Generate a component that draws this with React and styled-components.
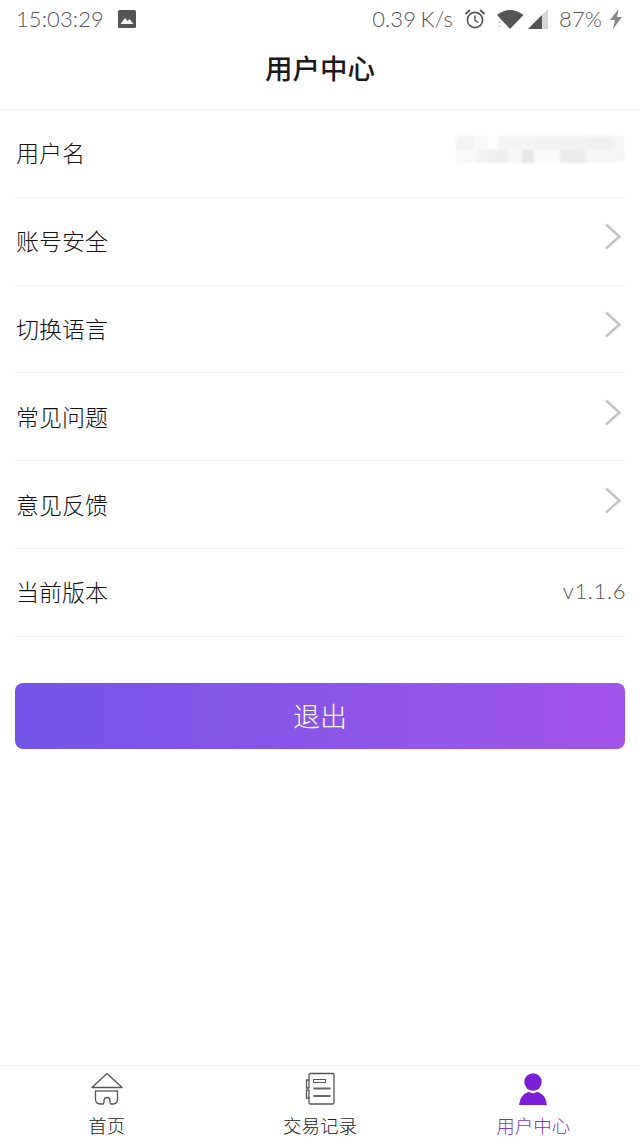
import React from "react";
import styled, { createGlobalStyle } from "styled-components";

const Global = createGlobalStyle`
  html, body { margin: 0; padding: 0; background: #fff; }
  * { box-sizing: border-box; }
  body { font-family: "Noto Sans CJK SC", "Noto Sans", sans-serif; }
`;

const Page = styled.div`
  width: 640px;
  height: 1138px;
  display: flex;
  flex-direction: column;
  background: #fff;
  overflow: hidden;
`;

const StatusBar = styled.div`
  height: 38px;
  padding: 0 17px 0 16px;
  display: flex;
  align-items: center;
  justify-content: space-between;
  font-family: "Lato", "Noto Sans", sans-serif;
  font-weight: 300;
  font-size: 22px;
  color: #555;
`;

const StatusGroup = styled.div`
  display: flex;
  align-items: center;
`;

const StatusText = styled.span`
  line-height: 38px;
  margin-left: ${(p) => p.$ml || 0}px;
  letter-spacing: 0.1px;
  word-spacing: -1.5px;
`;

const StatusIcon = styled.svg`
  display: block;
  flex: none;
  margin-left: ${(p) => p.$ml || 0}px;
`;

const Header = styled.header`
  height: 72px;
  display: flex;
  align-items: center;
  justify-content: center;
  padding-bottom: 13px;
  border-bottom: 1px solid #f0f0f0;
  font-size: 27.5px;
  font-weight: 500;
  color: #1a1a1a;
`;

const List = styled.div`
  padding: 0 15px;
  display: flex;
  flex-direction: column;
`;

const Row = styled.div`
  height: 87.8px;
  display: flex;
  align-items: center;
  justify-content: space-between;
  border-bottom: 1px solid #f4f4f4;
  font-size: 23px;
  font-weight: 300;
  color: #111;
`;

const RowLabel = styled.span`
  margin: -2px 0 0 1px;
`;

const Version = styled.span`
  font-family: "Lato", "Noto Sans", sans-serif;
  font-size: 22px;
  font-weight: 300;
  letter-spacing: 0.6px;
  color: #555;
  margin-right: -1px;
  margin-top: -3px;
`;

const Logout = styled.button`
  display: flex;
  align-items: center;
  justify-content: center;
  height: 66px;
  margin: 46px 15px 0;
  width: 610px;
  border: 0;
  padding: 0;
  border-radius: 8px;
  background: linear-gradient(90deg, #7454e8, #a254ea);
  color: #fff;
  font-family: inherit;
  font-size: 27px;
  font-weight: 300;
`;

const Spacer = styled.div`
  flex: 1;
`;

const TabBar = styled.nav`
  height: 73px;
  border-top: 1px solid #eee;
  display: grid;
  grid-template-columns: repeat(3, 1fr);
`;

const Tab = styled.div`
  display: flex;
  flex-direction: column;
  align-items: center;
  padding-top: 6px;
  color: ${(p) => (p.$active ? "#7a35bd" : "#222")};
  font-size: 18.5px;
  font-weight: 300;
  line-height: 27px;
`;

const TabIcon = styled.svg`
  display: block;
  margin-bottom: 6px;
`;

const ChevronIcon = styled.svg`
  display: block;
  margin: -8px 3px 0 0;
`;

const MosaicIcon = styled.svg`
  display: block;
  margin: -6px -1px 0 0;
  filter: blur(1px);
`;

const Chevron = () => (
  <ChevronIcon width="18" height="28" viewBox="0 0 18 28">
    <path d="M2 1.5 L15.5 13.5 L2 25.5" fill="none" stroke="#c4c4c4" strokeWidth="2.4" />
  </ChevronIcon>
);

const mosaic = [
  [0, 0, 18, 14, "#f3f3f3"], [18, 0, 14, 14, "#f8f8f8"], [32, 0, 10, 14, "#fdfdfd"], [42, 0, 38, 14, "#f4f4f4"],
  [80, 0, 48, 14, "#f2f2f2"], [128, 0, 28, 14, "#f0f0f0"], [156, 0, 12, 14, "#f5f5f5"],
  [0, 14, 20, 13, "#f8f8f8"], [20, 14, 12, 13, "#f3f3f3"], [32, 14, 20, 13, "#eeeeee"], [52, 14, 14, 13, "#f7f7f7"],
  [66, 14, 12, 13, "#e6e6e6"], [78, 14, 26, 13, "#fafafa"], [104, 14, 26, 13, "#ebebeb"], [130, 14, 30, 13, "#f6f6f6"], [160, 14, 8, 11, "#f4f4f4"],
];

const Mosaic = () => (
  <MosaicIcon width="170" height="28" viewBox="0 0 170 28">
    {mosaic.map(([x, y, w, h, c], i) => (
      <rect key={i} x={x} y={y} width={w} height={h} fill={c} />
    ))}
  </MosaicIcon>
);

const rows = ["账号安全", "切换语言", "常见问题", "意见反馈"];

export default function App() {
  return (
    <Page>
      <Global />
      <StatusBar>
        <StatusGroup>
          <StatusText>15:03:29</StatusText>
          <StatusIcon $ml={14} width="18" height="18" viewBox="0 0 18 18">
            <rect width="18" height="18" rx="1.5" fill="#555" />
            <path d="M2.5 14 L7 8 L9.5 11 L11.5 9 L15.5 14 Z" fill="#fff" />
          </StatusIcon>
        </StatusGroup>
        <StatusGroup>
          <StatusText>0.39 K/s</StatusText>
          <StatusIcon $ml={11} width="22" height="22" viewBox="0 0 22 22">
            <circle cx="11" cy="12" r="7.6" fill="none" stroke="#555" strokeWidth="1.6" />
            <path d="M11 7.5 V12.5 L14.5 14.5" fill="none" stroke="#555" strokeWidth="1.4" />
            <path d="M1.5 6 L6 2 M20.5 6 L16 2" stroke="#555" strokeWidth="1.8" />
          </StatusIcon>
          <StatusIcon $ml={10} width="28" height="22" viewBox="0 0 28 22">
            <path d="M1 7 Q14 -3 27.5 7 L14 21 Z" fill="#555" />
            <path d="M2 15 L3.5 13 L5 15 Z M2 17.5 L3.5 19.5 L5 17.5 Z" fill="#ccc" />
          </StatusIcon>
          <StatusIcon $ml={4} width="20" height="22" viewBox="0 0 20 22">
            <path d="M0 21 L20 1 V21 Z" fill="#d6d6d6" />
            <path d="M0 21 L14 7 V21 Z" fill="#555" />
          </StatusIcon>
          <StatusText $ml={11}>87%</StatusText>
          <StatusIcon $ml={7} width="14" height="20" viewBox="0 0 14 20">
            <path d="M9.5 0 L1 11 H6 L4 20 L13 8 H8 Z" fill="#888" />
          </StatusIcon>
        </StatusGroup>
      </StatusBar>
      <Header>用户中心</Header>
      <List>
        <Row>
          <RowLabel>用户名</RowLabel>
          <Mosaic />
        </Row>
        {rows.map((r) => (
          <Row key={r}>
            <RowLabel>{r}</RowLabel>
            <Chevron />
          </Row>
        ))}
        <Row>
          <RowLabel>当前版本</RowLabel>
          <Version>v1.1.6</Version>
        </Row>
      </List>
      <Logout>退出</Logout>
      <Spacer />
      <TabBar>
        <Tab>
          <TabIcon width="34" height="34" viewBox="0 0 34 34" fill="none" stroke="#555" strokeWidth="1.3">
            <path d="M17 1.5 L32 15.5 H2 Z" strokeLinejoin="round" />
            <path d="M5 19 H28" />
            <path d="M5.5 19 V27 Q5.5 32 10.5 32 H13 Q14 32 14 29 Q14 25.5 17 25.5 Q20 25.5 20 29 Q20 32 21 32 H23 Q27.5 32 27.5 27 V19" />
          </TabIcon>
          首页
        </Tab>
        <Tab>
          <TabIcon width="34" height="34" viewBox="0 0 34 34" fill="none" stroke="#555" strokeWidth="1.3">
            <path d="M6 8 V3 Q6 1.5 7.5 1.5 H29.5 Q31 1.5 31 3 V30.5 Q31 32 29.5 32 H7.5 Q6 32 6 30.5 V26" />
            <path d="M6 8 H3.5 V16 H6 V8 M6 18 H3.5 V26 H6 V18" />
            <rect x="10.5" y="7.5" width="12" height="3" strokeWidth="1" />
            <path d="M10.5 16.5 H27.5 M10.5 24 H27.5" strokeWidth="2" stroke="#666" />
          </TabIcon>
          交易记录
        </Tab>
        <Tab $active>
          <TabIcon width="34" height="34" viewBox="0 0 34 34" fill="#7a1fd6">
            <circle cx="17" cy="10" r="8.7" />
            <path d="M3 33 Q4 23 12.5 19.8 Q17 22.5 21.5 19.8 Q30 23 31 33 Z" />
          </TabIcon>
          用户中心
        </Tab>
      </TabBar>
    </Page>
  );
}
